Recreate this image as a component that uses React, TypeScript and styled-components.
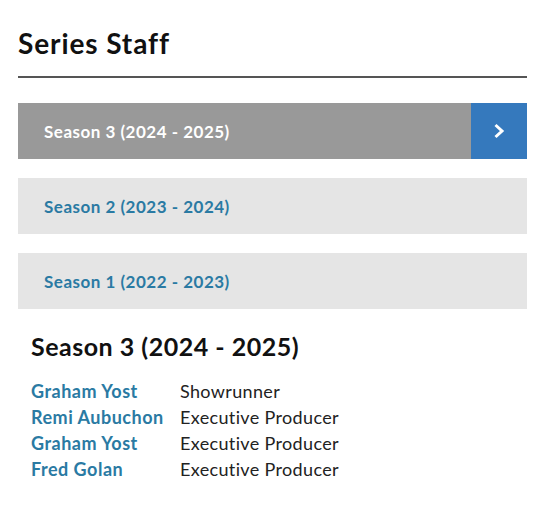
import styled, { createGlobalStyle } from 'styled-components'

const GlobalStyle = createGlobalStyle`
    body {
        margin: 0;
        background: #fff;
        font-family: Lato, "Open Sans", sans-serif;
    }
`

const seasons = [
    { label: 'Season 3 (2024 - 2025)', active: true },
    { label: 'Season 2 (2023 - 2024)', active: false },
    { label: 'Season 1 (2022 - 2023)', active: false },
]

const staff = [
    { name: 'Graham Yost', role: 'Showrunner' },
    { name: 'Remi Aubuchon', role: 'Executive Producer' },
    { name: 'Graham Yost', role: 'Executive Producer' },
    { name: 'Fred Golan', role: 'Executive Producer' },
]

export default function App() {
    return <Page>
        <GlobalStyle />
        <Title>Series Staff</Title>
        <Divider />

        <SeasonList>
            {seasons.map(s => (
                <SeasonRow key={s.label} $active={s.active}>
                    <SeasonLabel $active={s.active}>{s.label}</SeasonLabel>
                    {s.active && (
                        <ArrowBox>
                            <svg width="14" height="16" viewBox="0 0 14 16">
                                <path d="M3.5 2 L10 8 L3.5 14" fill="none" stroke="#fff" strokeWidth="3" />
                            </svg>
                        </ArrowBox>
                    )}
                </SeasonRow>
            ))}
        </SeasonList>

        <Details>
            <DetailsHeader>Season 3 (2024 - 2025)</DetailsHeader>
            <StaffTable>
                {staff.map((p, i) => (
                    <StaffRow key={i}>
                        <StaffName>{p.name}</StaffName>
                        <StaffRole>{p.role}</StaffRole>
                    </StaffRow>
                ))}
            </StaffTable>
        </Details>
    </Page>
}

const Page = styled.div`
    padding: 27px 13px 0 18px;
`

const Title = styled.h2`
    margin: 0;
    font-size: 28px;
    font-weight: 700;
    color: #111;
    line-height: 32px;
    letter-spacing: 0.9px;
`

const Divider = styled.div`
    margin-top: 17px;
    height: 2px;
    background: #555;
`

const SeasonList = styled.div`
    margin-top: 25px;
    display: flex;
    flex-direction: column;
    gap: 19px;
`

const SeasonRow = styled.div<{ $active: boolean }>`
    height: 56px;
    display: flex;
    align-items: center;
    background: ${p => p.$active ? '#999999' : '#e5e5e5'};
    cursor: pointer;
`

const SeasonLabel = styled.div<{ $active: boolean }>`
    flex: 1;
    padding-left: 26px;
    font-size: 17px;
    font-weight: 700;
    letter-spacing: 0.5px;
    color: ${p => p.$active ? '#fff' : '#2a7aa3'};
`

const ArrowBox = styled.div`
    width: 56px;
    height: 56px;
    background: #3579bd;
    display: flex;
    align-items: center;
    justify-content: center;
`

const Details = styled.div`
    padding-left: 13px;
    margin-top: 22px;
`

const DetailsHeader = styled.h3`
    margin: 0;
    font-size: 25px;
    font-weight: 700;
    color: #111;
    line-height: 30px;
    letter-spacing: 0.5px;
`

const StaffTable = styled.div`
    margin-top: 17px;
    display: flex;
    flex-direction: column;
`

const StaffRow = styled.div`
    display: grid;
    grid-template-columns: 149px 1fr;
    line-height: 26px;
    font-size: 18px;
`

const StaffName = styled.div`
    font-weight: 700;
    letter-spacing: 0.5px;
    color: #2a7aa3;
`

const StaffRole = styled.div`
    color: #222;
    letter-spacing: 0.35px;
`
